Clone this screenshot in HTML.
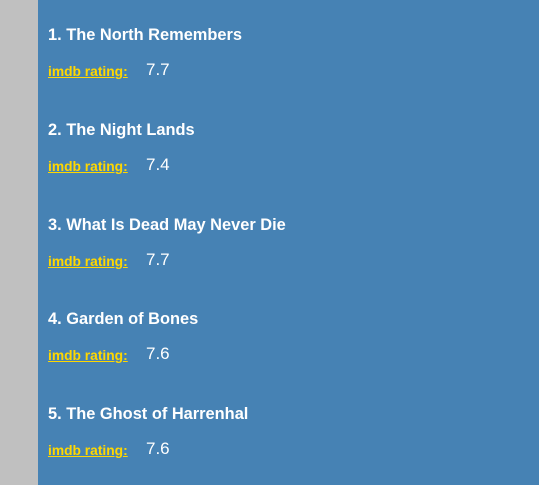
<!DOCTYPE html>
<html><head><style>
body{margin:0;width:539px;height:485px;background:#4682b4;font-family:"Liberation Sans",Arial,sans-serif;position:relative;overflow:hidden}
.side{position:absolute;left:0;top:0;width:38px;height:485px;background:#c0c0c0}
.item{position:absolute;left:48px;width:480px}
.t{position:absolute;top:1px;left:0;color:#fff;font-weight:bold;font-size:16.4px;white-space:nowrap}
.r{position:absolute;top:38px;left:0;white-space:nowrap}
.r a{color:#ffd700;font-weight:bold;font-size:13.8px;text-decoration:underline}
.r span{position:absolute;left:98px;top:-3px;color:#fff;font-size:17px}
</style></head><body>
<div class="side"></div>
<div class="item" style="top:25px"><div class="t">1. The North Remembers</div><div class="r"><a>imdb rating:</a><span>7.7</span></div></div>
<div class="item" style="top:120px"><div class="t">2. The Night Lands</div><div class="r"><a>imdb rating:</a><span>7.4</span></div></div>
<div class="item" style="top:215px"><div class="t">3. What Is Dead May Never Die</div><div class="r"><a>imdb rating:</a><span>7.7</span></div></div>
<div class="item" style="top:309px"><div class="t">4. Garden of Bones</div><div class="r"><a>imdb rating:</a><span>7.6</span></div></div>
<div class="item" style="top:404px"><div class="t">5. The Ghost of Harrenhal</div><div class="r"><a>imdb rating:</a><span>7.6</span></div></div>
</body></html>
